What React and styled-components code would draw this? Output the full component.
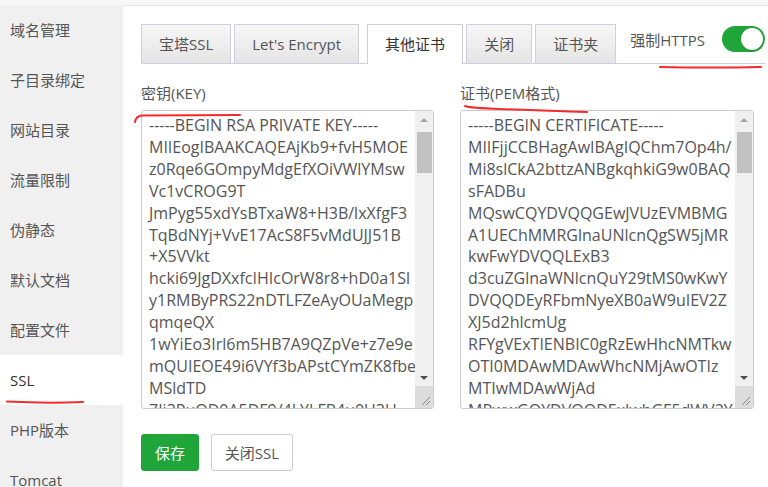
import React from 'react';
import styled, { createGlobalStyle } from 'styled-components';

const Global = createGlobalStyle`
  html, body { margin: 0; padding: 0; background: #fff; }
  body {
    width: 768px; height: 487px; overflow: hidden;
    font-family: "Open Sans", "Noto Sans CJK SC", sans-serif;
    font-size: 15px; color: #555;
  }
  * { box-sizing: border-box; }
`;

const Page = styled.div`
  position: relative;
  height: 487px;
  display: flex;
  flex-direction: column;
`;

const TopStrip = styled.div`
  height: 5px;
  background: #f7f7f7;
  flex: none;
`;

const Body = styled.div`
  flex: 1;
  min-height: 0;
  display: flex;
`;

const Sidebar = styled.nav`
  width: 123px;
  flex: none;
  background: #f0f0f0;
  display: flex;
  flex-direction: column;
  overflow: hidden;
`;

const NavItem = styled.div`
  height: 50px;
  flex: none;
  line-height: 50px;
  padding-left: 10px;
  font-size: 15px;
  color: ${p => (p.$active ? '#333' : '#555')};
  background: ${p => (p.$active ? '#fff' : 'transparent')};
  white-space: nowrap;
`;

const Main = styled.main`
  flex: 1;
  min-width: 0;
  border-top: 1px solid #e6e6e6;
  padding: 18px 3px 0 18px;
`;

const TabBar = styled.div`
  display: flex;
  align-items: flex-end;
  height: 40px;
  border-bottom: 1px solid #cfcfe0;
`;

const Tab = styled.div`
  height: ${p => (p.$active ? '40px' : '39px')};
  margin-bottom: ${p => (p.$active ? '-1px' : '0')};
  margin-left: ${p => (p.$active ? '5px' : '0')};
  margin-right: 3px;
  padding: 0 17px;
  line-height: 38px;
  font-size: 15px;
  color: ${p => (p.$active ? '#333' : '#555')};
  border: 1px solid #cfcfe0;
  border-bottom: 0;
  background: ${p => (p.$active ? '#fff' : 'linear-gradient(#f7f7f7, #e4e4e4)')};
  white-space: nowrap;
`;

const HttpsSwitch = styled.div`
  margin-left: auto;
  align-self: flex-start;
  margin-top: 2px;
  height: 26px;
  display: flex;
  align-items: center;
  gap: 17px;
  font-size: 15px;
  color: #555;
`;

const Toggle = styled.div`
  width: 43px;
  height: 26px;
  border-radius: 13px;
  background: #20a53a;
  display: flex;
  align-items: center;
  justify-content: flex-end;
  padding-right: 2px;
`;

const Knob = styled.div`
  width: 22px;
  height: 22px;
  border-radius: 50%;
  background: #fff;
  box-shadow: 0 1px 2px rgba(0,0,0,0.2);
`;

const Editors = styled.div`
  display: grid;
  grid-template-columns: 293px 294px;
  column-gap: 26px;
  margin-top: 19px;
`;

const Field = styled.div`
  display: flex;
  flex-direction: column;
`;

const FieldLabel = styled.div`
  height: 20px;
  line-height: 20px;
  font-size: 15px;
  color: #555;
  margin-bottom: 7px;
`;

const Editor = styled.div`
  height: 299px;
  border: 1px solid #ccc;
  border-radius: 3px;
  display: flex;
  overflow: hidden;
  background: #fff;
`;

const EditorText = styled.div`
  flex: 1;
  min-width: 0;
  padding: 4px 0 0 7px;
  white-space: pre;
  font-size: 16px;
  line-height: 21.9px;
  color: #555;
  overflow: hidden;
`;

const Scrollbar = styled.div`
  width: 18px;
  flex: none;
  background: #f0f0f0;
  display: flex;
  flex-direction: column;
`;

const ArrowButton = styled.div`
  height: 17px;
  flex: none;
  display: flex;
  align-items: center;
  justify-content: center;
  &::before {
    content: '';
    width: 0; height: 0;
    border-left: 4px solid transparent;
    border-right: 4px solid transparent;
    ${p => p.$dir === 'up'
      ? 'border-bottom: 4px solid #a3a3a3;'
      : 'border-top: 4px solid #505050;'}
  }
`;

const Track = styled.div`
  flex: 1;
  padding: 4px 1px 0 2px;
`;

const Thumb = styled.div`
  height: 41px;
  background: #c1c1c1;
`;

const Corner = styled.div`
  height: 22px;
  flex: none;
  background: #dcdcdc;
  display: flex;
  align-items: flex-end;
  justify-content: flex-end;
  padding: 0 2px 2px 0;
`;

const ButtonRow = styled.div`
  display: flex;
  gap: 12px;
  margin-top: 25px;
`;

const Button = styled.button`
  height: 37px;
  padding: 0;
  width: ${p => p.$w}px;
  border-radius: 3px;
  font-family: inherit;
  font-size: 15px;
  border: 1px solid ${p => (p.$primary ? '#20a53a' : '#ccc')};
  background: ${p => (p.$primary ? '#20a53a' : '#fff')};
  color: ${p => (p.$primary ? '#fff' : '#555')};
`;

const Overlay = styled.svg`
  position: absolute;
  left: 0;
  top: 0;
  pointer-events: none;
`;

const navItems = ['域名管理', '子目录绑定', '网站目录', '流量限制', '伪静态', '默认文档', '配置文件', 'SSL', 'PHP版本', 'Tomcat'];
const tabs = ['宝塔SSL', "Let's Encrypt", '其他证书', '关闭', '证书夹'];

const keyLines = [
  '-----BEGIN RSA PRIVATE KEY-----',
  'MIIEogIBAAKCAQEAjKb9+fvH5MOE',
  'z0Rqe6GOmpyMdgEfXOiVWlYMsw',
  'Vc1vCROG9T',
  'JmPyg55xdYsBTxaW8+H3B/lxXfgF3',
  'TqBdNYj+VvE17AcS8F5vMdUJJ51B',
  '+X5VVkt',
  'hcki69JgDXxfcIHIcOrW8r8+hD0a1Sl',
  'y1RMByPRS22nDTLFZeAyOUaMegp',
  'qmqeQX',
  '1wYiEo3Irl6m5HB7A9QZpVe+z7e9e',
  'mQUIEOE49i6VYf3bAPstCYmZK8fbe',
  'MSldTD',
  '7Ij3PuOD0A5DF9/4LYLFB4u0U3U',
];

const certLines = [
  '-----BEGIN CERTIFICATE-----',
  'MIIFjjCCBHagAwIBAgIQChm7Op4h/',
  'Mi8slCkA2bttzANBgkqhkiG9w0BAQ',
  'sFADBu',
  'MQswCQYDVQQGEwJVUzEVMBMG',
  'A1UEChMMRGlnaUNlcnQgSW5jMR',
  'kwFwYDVQQLExB3',
  'd3cuZGlnaWNlcnQuY29tMS0wKwY',
  'DVQQDEyRFbmNyeXB0aW9uIEV2Z',
  'XJ5d2hlcmUg',
  'RFYgVExTIENBIC0gRzEwHhcNMTkw',
  'OTI0MDAwMDAwWhcNMjAwOTIz',
  'MTIwMDAwWjAd',
  'MRwwGQYDVQQDExJwbGF5dWV2Y',
];

function CodeBox({ lines }) {
  return (
    <Editor>
      <EditorText>{lines.join('\n')}</EditorText>
      <Scrollbar>
        <ArrowButton $dir="up" />
        <Track><Thumb /></Track>
        <ArrowButton $dir="down" />
        <Corner>
          <svg width="12" height="12" viewBox="0 0 12 12">
            <path d="M11 3 L3 11 M11 7 L7 11" stroke="#8a8a8a" strokeWidth="1" />
          </svg>
        </Corner>
      </Scrollbar>
    </Editor>
  );
}

export default function App() {
  return (
    <>
      <Global />
      <Page>
        <TopStrip />
        <Body>
          <Sidebar>
            {navItems.map(n => (
              <NavItem key={n} $active={n === 'SSL'}>{n}</NavItem>
            ))}
          </Sidebar>
          <Main>
            <TabBar>
              {tabs.map(t => (
                <Tab key={t} $active={t === '其他证书'}>{t}</Tab>
              ))}
              <HttpsSwitch>
                <span>强制HTTPS</span>
                <Toggle><Knob /></Toggle>
              </HttpsSwitch>
            </TabBar>
            <Editors>
              <Field>
                <FieldLabel>密钥(KEY)</FieldLabel>
                <CodeBox lines={keyLines} />
              </Field>
              <Field>
                <FieldLabel>证书(PEM格式)</FieldLabel>
                <CodeBox lines={certLines} />
              </Field>
            </Editors>
            <ButtonRow>
              <Button $primary $w={58}>保存</Button>
              <Button $w={82}>关闭SSL</Button>
            </ButtonRow>
          </Main>
        </Body>
        <Overlay width="768" height="487" viewBox="0 0 768 487">
          <g fill="none" stroke="#f52a2a" strokeWidth="2" strokeLinecap="round">
            <path d="M7 401.5 Q45 403.5 83 402" />
            <path d="M660 67 Q710 68 761 67" />
            <path d="M135 122 Q136 116 142 115.5 L240 115" />
            <path d="M465 106 Q470 108 500 109 Q550 111 587 112" />
          </g>
        </Overlay>
      </Page>
    </>
  );
}
